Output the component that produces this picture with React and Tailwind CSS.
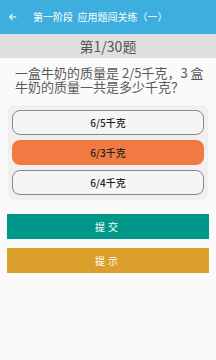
import React, { useState } from 'react';

const options = ['6/5千克', '6/3千克', '6/4千克'];

const App = () => {
  const [selected, setSelected] = useState(1);

  return (
    <div className="w-[216px] h-[360px] bg-[#fafafa] flex flex-col" style={{ fontFamily: '"Noto Sans CJK SC", "Noto Sans", sans-serif' }}>
      {/* Header */}
      <div className="h-[34px] bg-[#3daedd] flex items-center text-white">
        <svg className="ml-[8px] w-[10px] h-[10px]" viewBox="0 0 24 24" fill="none" stroke="white" strokeWidth="2.6">
          <path d="M20 12H5M11 5l-7 7 7 7" />
        </svg>
        <span className="ml-[15px] text-[10px] leading-none">第一阶段&nbsp;&nbsp;应用题闯关练（一）</span>
      </div>

      {/* Progress */}
      <div className="h-[24px] bg-[#e0dfdd] flex items-center justify-center text-[14px] text-[#555] leading-none">
        第1/30题
      </div>

      {/* Question */}
      <div className="pl-[15px] pr-[10px] pt-[8px] text-[13px] leading-[14px] text-[#5a5a5a]">
        一盒牛奶的质量是 2/5千克，3 盒牛奶的质量一共是多少千克？
      </div>

      {/* Options */}
      <div className="mx-[8px] mt-[11px] bg-[#f0f0f0] rounded-[6px] px-[4px] py-[5px] flex flex-col gap-[5px]">
        {options.map((opt, i) => (
          <button
            key={opt}
            onClick={() => setSelected(i)}
            className={
              i === selected
                ? 'h-[25px] rounded-[8px] bg-[#f07a42] text-[#222] text-[10px] font-medium flex items-center justify-center'
                : 'h-[25px] rounded-[8px] border border-[#888] bg-[#f5f5f5] text-[#222] text-[10px] font-medium flex items-center justify-center'
            }
          >
            {opt}
          </button>
        ))}
      </div>

      {/* Actions */}
      <div className="mx-[7px] mt-[14px] flex flex-col gap-[9px]">
        <button className="h-[25px] bg-[#009688] text-white text-[10px] tracking-[3px] flex items-center justify-center">
          提交
        </button>
        <button className="h-[25px] bg-[#dba02b] text-white text-[10px] tracking-[3px] flex items-center justify-center">
          提示
        </button>
      </div>
    </div>
  );
};

export default App;
